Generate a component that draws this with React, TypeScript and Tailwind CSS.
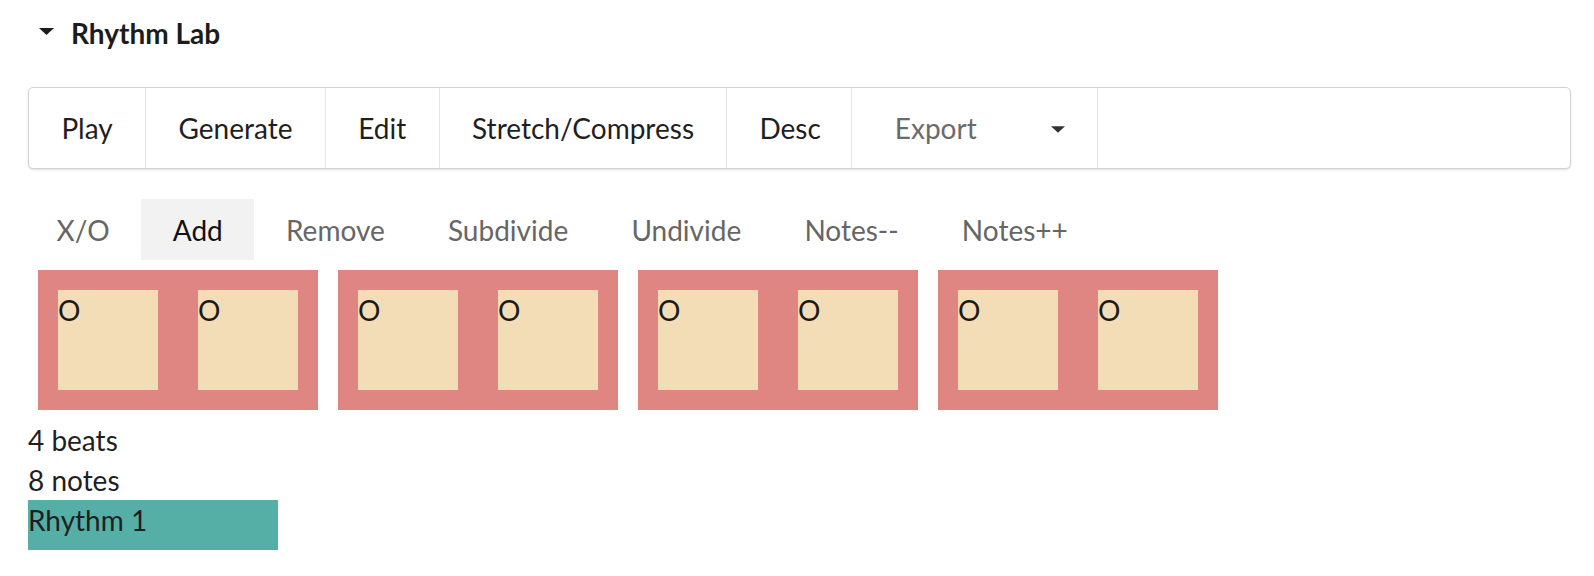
import React from 'react';

const mainItems = ['Play', 'Generate', 'Edit', 'Stretch/Compress', 'Desc'];
const subItems = ['X/O', 'Add', 'Remove', 'Subdivide', 'Undivide', 'Notes--', 'Notes++'];
const beats = [['O', 'O'], ['O', 'O'], ['O', 'O'], ['O', 'O']];

function Caret({ className }: { className?: string }) {
  return (
    <svg width="15" height="7" viewBox="0 0 15 7" className={className}>
      <polygon points="0,0 15,0 7.5,7" fill="currentColor" />
    </svg>
  );
}

export default function App() {
  return (
    <div className="min-h-[576px] bg-white pl-[28px] pt-[14px] text-[28px] text-[#1f1f1f] [font-family:Lato,'Liberation_Sans',sans-serif]">
      {/* accordion title */}
      <div className="flex h-[40px] items-center leading-[40px]">
        <Caret className="ml-[11px] mt-[-6px] text-[#1b1c1d]" />
        <span className="ml-[17px] mt-[-2px] text-[28px] font-bold text-[#1b1c1d]">Rhythm Lab</span>
      </div>

      {/* main menu */}
      <div className="mt-[33px] flex h-[82px] w-[1543px] rounded-[5px] border border-[#d4d4d5] bg-white shadow-[0_1px_2px_0_rgba(34,36,38,0.15)]">
        {mainItems.map((label) => (
          <div
            key={label}
            className={
              label === 'Desc'
                ? 'flex items-center border-r border-[#e5e5e6] pl-[32px] pr-[30px] leading-none'
                : 'flex items-center border-r border-[#e5e5e6] px-[32.4px] leading-none'
            }
          >
            {label}
          </div>
        ))}
        <div className="flex w-[246px] items-center justify-between border-r border-[#e5e5e6] pl-[43px] pr-[32px] leading-none">
          <span className="text-[#6b6b6b]">Export</span>
          <Caret className="mt-[2px] w-[14px] text-[#333]" />
        </div>
      </div>

      {/* secondary menu */}
      <div className="mt-[30px] ml-[-3px] flex h-[61px]">
        {subItems.map((label) => (
          <div
            key={label}
            className={
              label === 'Add'
                ? 'flex items-center bg-[#f2f2f2] px-[31.6px] leading-none text-[#111]'
                : 'flex items-center px-[31.6px] leading-none text-[#666]'
            }
          >
            {label}
          </div>
        ))}
      </div>

      {/* beats */}
      <div className="flex">
        {beats.map((notes, i) => (
          <div key={i} className="m-[10px] flex bg-[#e08682]">
            {notes.map((n, j) => (
              <div key={j} className="m-[20px] h-[100px] w-[100px] bg-[#f2ddb7] leading-[40px] text-[#1a1a1a]">
                {n}
              </div>
            ))}
          </div>
        ))}
      </div>

      <div className="leading-[40px]">4 beats</div>
      <div className="leading-[40px]">8 notes</div>
      <div className="h-[50px] w-[250px] bg-[#55afa7] leading-[40px]">Rhythm 1</div>
    </div>
  );
}
